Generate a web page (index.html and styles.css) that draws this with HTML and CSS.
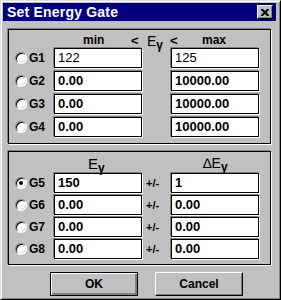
FILE: index.html
```html
<!DOCTYPE html>
<html lang="en">
<head>
    <meta charset="UTF-8">
    <title>Set Energy Gate</title>
    <link rel="stylesheet" href="styles.css">
</head>
<body>
    <div class="window">
        <div class="titlebar">
            <span class="title">Set Energy Gate</span>
            <span class="close">
                <svg width="8" height="7" viewBox="0 0 8 7"><path d="M0 0h2l2 2 2-2h2v1l-2.5 2.5L8 6v1H6L4 5 2 7H0V6l2.5-2.5L0 1z" fill="#000"/></svg>
            </span>
        </div>

        <div class="group range">
            <div class="head">
                <span class="h-min">min</span>
                <span class="lt lt1">&lt;</span>
                <span class="ey">E<sub>γ</sub></span>
                <span class="lt lt2">&lt;</span>
                <span class="h-max">max</span>
            </div>
            <div class="row">
                <span class="radio"></span><span class="gname">G1</span>
                <span class="field plain">122</span>
                <span class="mid"></span>
                <span class="field plain">125</span>
            </div>
            <div class="row">
                <span class="radio"></span><span class="gname">G2</span>
                <span class="field">0.00</span>
                <span class="mid"></span>
                <span class="field">10000.00</span>
            </div>
            <div class="row">
                <span class="radio"></span><span class="gname">G3</span>
                <span class="field">0.00</span>
                <span class="mid"></span>
                <span class="field">10000.00</span>
            </div>
            <div class="row">
                <span class="radio"></span><span class="gname">G4</span>
                <span class="field">0.00</span>
                <span class="mid"></span>
                <span class="field">10000.00</span>
            </div>
        </div>

        <div class="group center">
            <div class="head">
                <span class="c-ey">E<sub>γ</sub></span>
                <span class="c-dey">∆E<sub>γ</sub></span>
            </div>
            <div class="row">
                <span class="radio on"></span><span class="gname">G5</span>
                <span class="field">150</span>
                <span class="mid">+/-</span>
                <span class="field">1</span>
            </div>
            <div class="row">
                <span class="radio"></span><span class="gname">G6</span>
                <span class="field">0.00</span>
                <span class="mid">+/-</span>
                <span class="field">0.00</span>
            </div>
            <div class="row">
                <span class="radio"></span><span class="gname">G7</span>
                <span class="field">0.00</span>
                <span class="mid">+/-</span>
                <span class="field">0.00</span>
            </div>
            <div class="row">
                <span class="radio"></span><span class="gname">G8</span>
                <span class="field">0.00</span>
                <span class="mid">+/-</span>
                <span class="field">0.00</span>
            </div>
        </div>

        <div class="actions">
            <button class="btn default">OK</button>
            <button class="btn">Cancel</button>
        </div>
    </div>
</body>
</html>
```

FILE: styles.css
```css
/* window frame */
body {
    margin: 0;
    background: #c0c0c0;
    font-family: 'Liberation Sans', Arial, sans-serif;
}
.window {
    box-sizing: border-box;
    width: 281px;
    height: 300px;
    padding: 3px 4px 4px 3px;
    background: #c0c0c0;
    border: 1px solid;
    border-color: #dfdfdf #000 #000 #dfdfdf;
    box-shadow: inset 1px 1px 0 #fff, inset -1px -1px 0 #808080;
}

/* title bar */
.titlebar {
    height: 18px;
    margin: -1px 0 0 -1px;
    background: #000080;
    display: flex;
    align-items: center;
    justify-content: space-between;
    padding: 0 3px 0 4px;
}
.title {
    color: #fff;
    font-weight: bold;
    font-size: 14px;
    letter-spacing: 0.2px;
}
.close {
    box-sizing: border-box;
    width: 16px;
    height: 14px;
    background: #c0c0c0;
    border: 1px solid;
    border-color: #fff #000 #000 #fff;
    box-shadow: inset -1px -1px 0 #808080;
    display: flex;
    align-items: center;
    justify-content: center;
    padding-right: 1px;
}

/* group boxes */
.group {
    box-sizing: border-box;
    width: 263px;
    margin-left: 4px;
    border: 1px solid #000;
    box-shadow: -1px -1px 0 #808080, 1px 1px 0 #fff;
    padding: 0 0 0 6px;
}
.range {
    margin-top: 8px;
    height: 115px;
}
.center {
    margin-top: 7px;
    height: 114px;
}

.head {
    position: relative;
    height: 18px;
    font-weight: bold;
    font-size: 12px;
}
.head span {
    position: absolute;
}
.h-min { left: 68px; top: 3px; }
.lt { font-size: 13px; top: 3px; font-weight: bold; }
.lt1 { left: 116px; }
.lt2 { left: 155px; }
.h-max { left: 187px; top: 3px; }
.ey { left: 132px; top: 3px; font-size: 14px; font-weight: normal; }
sub {
    font-size: 13px;
    font-weight: bold;
    vertical-align: -3px;
    line-height: 0;
}
.ey sub, .c-ey sub, .c-dey sub { font-size: 12px; }

.center .head { height: 21px; }
.c-ey { left: 73px; top: 3px; font-size: 15px; font-weight: normal; }
.c-dey { left: 188px; top: 3px; font-size: 14px; font-weight: normal; }

/* rows */
.row {
    display: grid;
    grid-template-columns: 14px 25px 88px 29px 88px;
    align-items: center;
    height: 20px;
    margin-bottom: 3px;
}
.center .row { margin-bottom: 2px; }

.radio {
    box-sizing: border-box;
    width: 12px;
    height: 12px;
    border-radius: 50%;
    background: #fff;
    border: 1px solid;
    border-color: #808080 #fff #fff #808080;
    box-shadow: inset 1px 1px 0 #000, inset -1px -1px 0 #dfdfdf;
    position: relative;
}
.radio.on::after {
    content: "";
    position: absolute;
    left: 3px;
    top: 3px;
    width: 4px;
    height: 4px;
    border-radius: 50%;
    background: #000;
}
.gname {
    font-weight: bold;
    font-size: 12px;
}
.mid {
    font-weight: bold;
    font-size: 11px;
    padding-left: 4px;
}

.field {
    box-sizing: border-box;
    height: 20px;
    background: #fff;
    border: 1px solid #000;
    box-shadow: -1px -1px 0 #808080, 1px 1px 0 #fff;
    font-size: 13px;
    font-weight: bold;
    line-height: 18px;
    padding-left: 3px;
}
.field.plain {
    font-weight: normal;
}

/* buttons */
.actions {
    display: flex;
    gap: 17px;
    margin: 7px 0 0 46px;
}
.btn {
    box-sizing: border-box;
    width: 88px;
    height: 24px;
    background: #c0c0c0;
    border: 1px solid;
    border-color: #fff #000 #000 #fff;
    box-shadow: inset -1px -1px 0 #808080;
    font-family: 'Liberation Sans', Arial, sans-serif;
    font-weight: bold;
    font-size: 12px;
    padding: 0;
}
.btn.default {
    border: 1px solid #000;
    box-shadow: inset 1px 1px 0 #fff, inset -2px -2px 0 #808080, inset -1px -1px 0 #000;
}
```
